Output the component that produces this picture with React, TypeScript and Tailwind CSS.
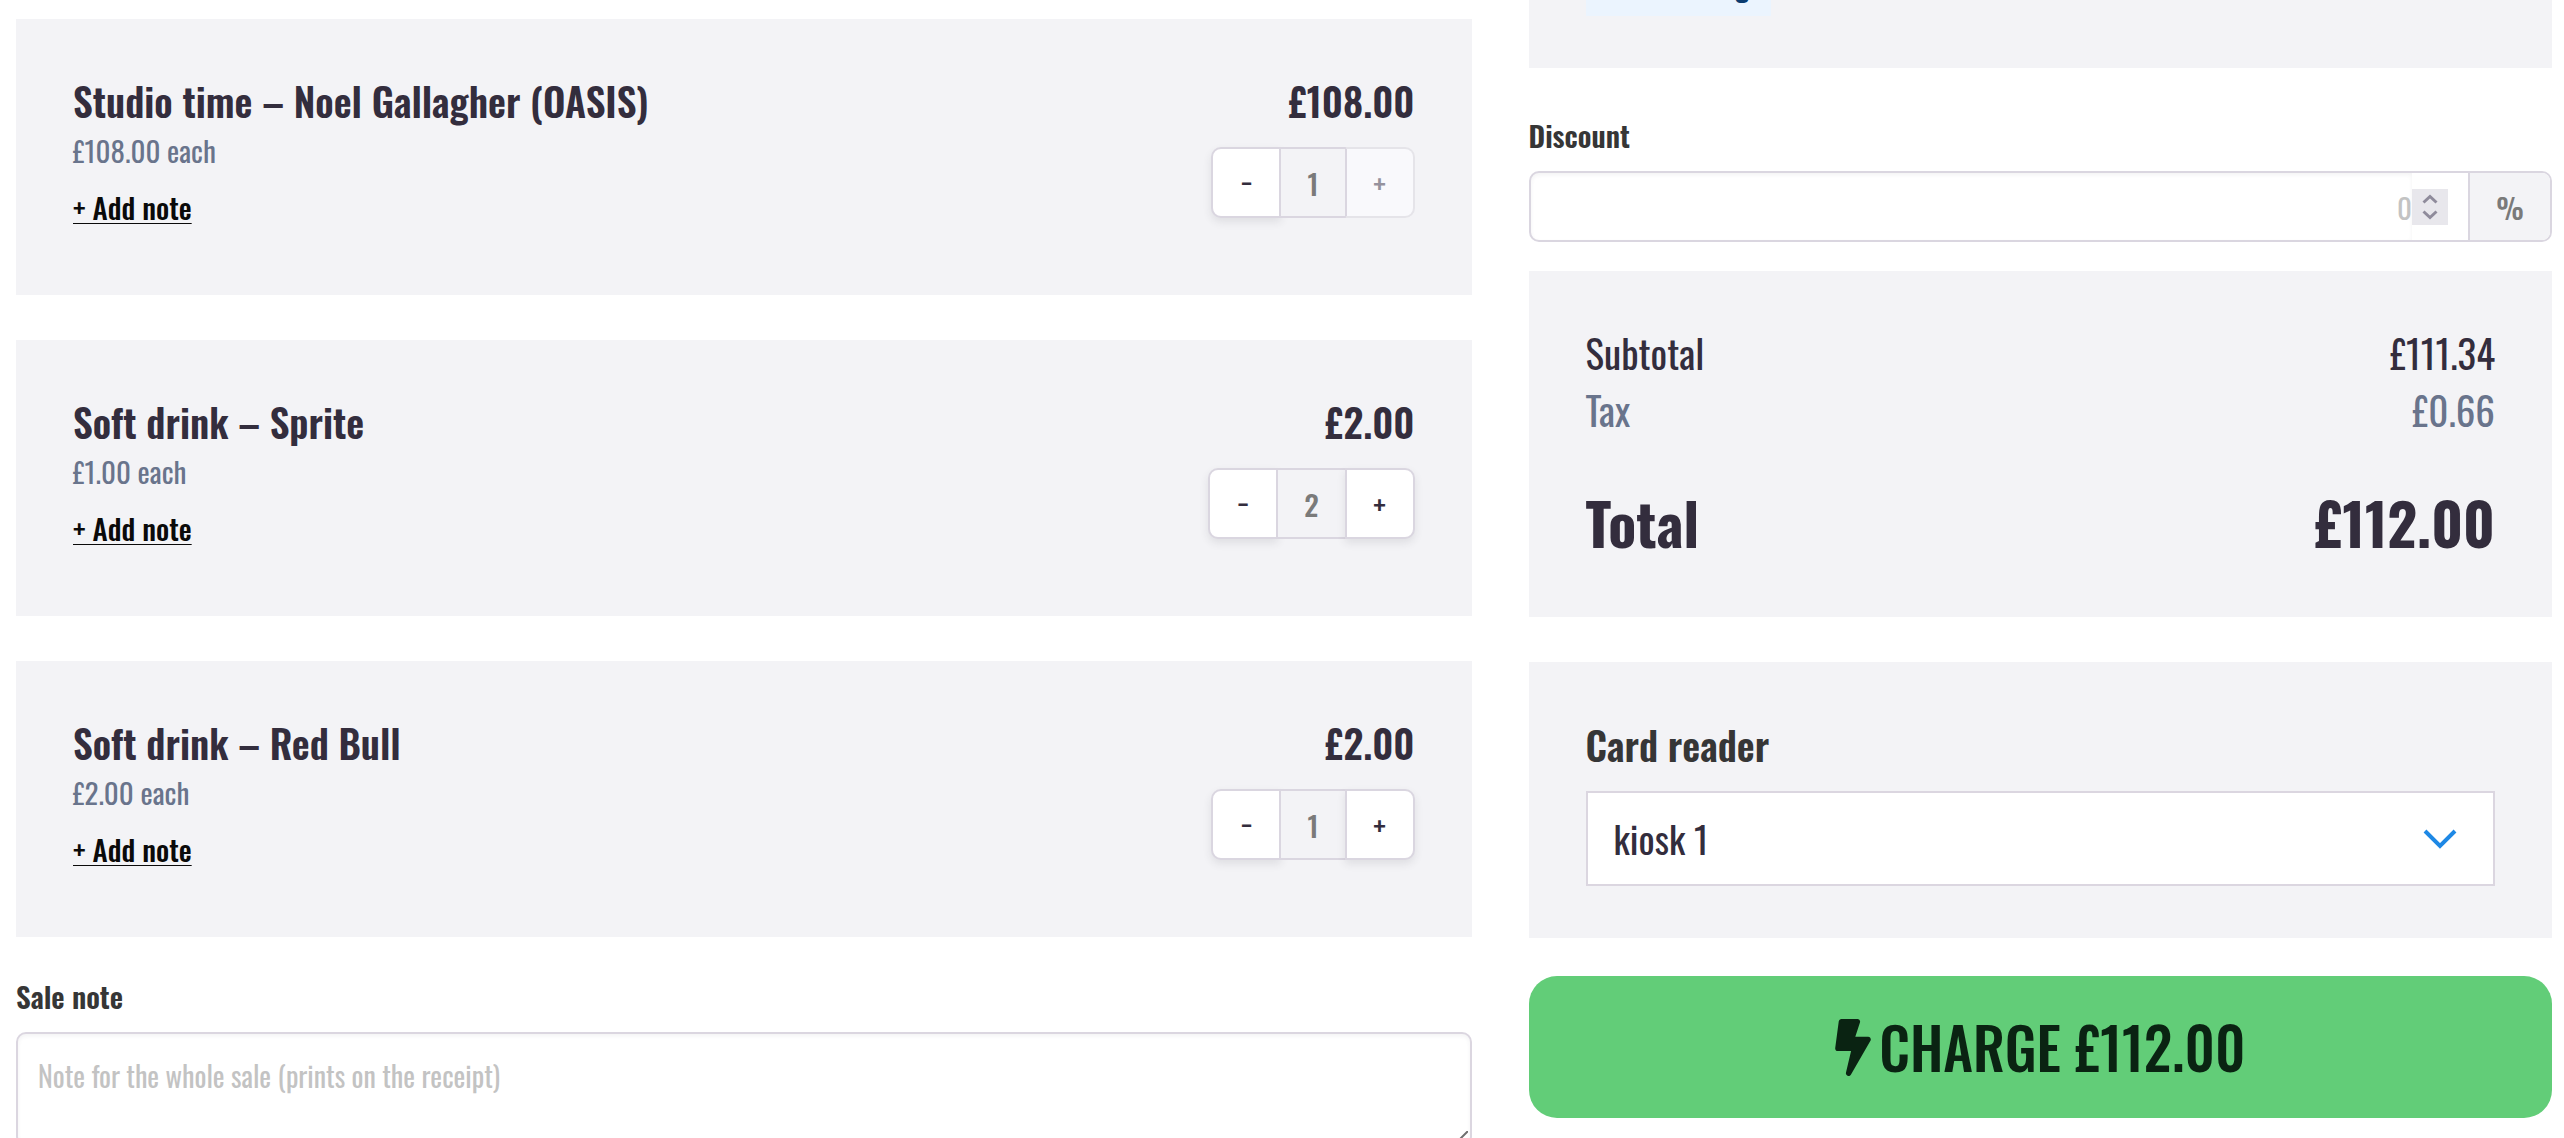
import { useState } from 'react';
import { FaBolt } from 'react-icons/fa';

interface CartLine {
  id: string;
  name: string;
  unitPrice: number;
  quantity: number;
  maxQuantity?: number;
}

const initialLines: CartLine[] = [
  { id: 'studio-time', name: 'Studio time – Noel Gallagher (OASIS)', unitPrice: 108, quantity: 1, maxQuantity: 1 },
  { id: 'sprite', name: 'Soft drink – Sprite', unitPrice: 1, quantity: 2 },
  { id: 'red-bull', name: 'Soft drink – Red Bull', unitPrice: 2, quantity: 1 },
];

const TAX = 0.66;

const formatPrice = (value: number) => `£${value.toFixed(2)}`;

interface QuantityStepperProps {
  quantity: number;
  max?: number;
  onChange: (quantity: number) => void;
}

function QuantityStepper({ quantity, max, onChange }: QuantityStepperProps) {
  const atMax = max !== undefined && quantity >= max;

  return (
    <div className="flex h-[71px] text-[29px] font-medium text-[#332d3d]">
      <button
        type="button"
        aria-label="Decrease quantity"
        onClick={() => onChange(Math.max(0, quantity - 1))}
        className="w-[70px] rounded-l-[10px] border-2 border-[#dad6e0] bg-white shadow-[0_4px_8px_rgba(50,45,60,0.1)]"
      >
        −
      </button>
      <output className="-ml-[2px] flex items-center justify-center border-2 border-[#dad6e0] bg-[#f3f3f6] px-[26px] text-[#7a7a7a]">
        {quantity}
      </output>
      <button
        type="button"
        aria-label="Increase quantity"
        disabled={atMax}
        onClick={() => onChange(quantity + 1)}
        className="-ml-[2px] w-[70px] rounded-r-[10px] border-2 border-[#dad6e0] bg-white shadow-[0_4px_8px_rgba(50,45,60,0.1)] disabled:border-y-[#e5e4e9] disabled:border-r-[#e5e4e9] disabled:bg-[#f9f9fc] disabled:text-[#95929d] disabled:shadow-none"
      >
        +
      </button>
    </div>
  );
}

export default function App() {
  const [lines, setLines] = useState(initialLines);
  const [discount, setDiscount] = useState('');
  const [saleNote, setSaleNote] = useState('');

  const gross = lines.reduce((sum, line) => sum + line.unitPrice * line.quantity, 0);
  const total = gross * (1 - Number(discount) / 100);

  const setQuantity = (id: string, quantity: number) => {
    setLines(lines.map(line => (line.id === id ? { ...line, quantity } : line)));
  };

  return (
    <div className="grid h-screen grid-cols-[64fr_45fr] gap-[57px] overflow-hidden bg-white pr-3 pl-4 font-['Oswald','Roboto_Condensed','Roboto',sans-serif] text-[#363636]">
      {/* Cart */}
      <main className="pt-[19px]">
        <ul className="space-y-[45px]">
          {lines.map(line => (
            <li key={line.id} className="flex justify-between bg-[#f3f3f6] px-[57px] py-[55px]">
              <div>
                <h2 className="text-[39px] leading-[52px] font-semibold text-[#332d3d]">{line.name}</h2>
                <p className="text-[29px] leading-[48px] text-[#69748c]">{formatPrice(line.unitPrice)} each</p>
                <button type="button" className="block text-[29px] leading-[66px] font-medium text-[#0a0a0a] underline decoration-1 underline-offset-[3px]">
                  + Add note
                </button>
              </div>
              <div className="flex flex-col items-end">
                <p className="mb-[21px] text-[39px] leading-[52px] font-semibold text-[#332d3d]">
                  {formatPrice(line.unitPrice * line.quantity)}
                </p>
                <QuantityStepper
                  quantity={line.quantity}
                  max={line.maxQuantity}
                  onChange={quantity => setQuantity(line.id, quantity)}
                />
              </div>
            </li>
          ))}
        </ul>

        <label htmlFor="sale-note" className="mt-[37px] mb-[14px] block text-[29px] leading-[44px] font-semibold">
          Sale note
        </label>
        <div className="relative">
          <textarea
            id="sale-note"
            placeholder="Note for the whole sale (prints on the receipt)"
            value={saleNote}
            onChange={(e) => setSaleNote(e.target.value)}
            className="block h-[114px] w-full resize-none rounded-[10px] border-2 border-[#dbd6e0] px-5 py-5 text-[28px] leading-[44px] shadow-[inset_0_2px_4px_rgba(50,45,60,0.06)] placeholder:text-[#c3c3c3]"
          />
          <svg className="pointer-events-none absolute right-1 bottom-0 size-[15px]" viewBox="0 0 15 15" stroke="#6f6f6f" strokeWidth="2">
            <path d="M0 15L15 0M8 15L15 8" />
          </svg>
        </div>
      </main>

      {/* Checkout */}
      <aside>
        <section className="-mt-[46px] bg-[#f3f3f6] px-[57px] pb-[52px]">
          <a href="#booking" className="inline-block bg-[#ebf4fe] px-[22px] text-[29px] leading-[62px] font-medium text-[#0b3c6f]">
            New booking
          </a>
        </section>

        <label htmlFor="discount" className="mt-[45px] mb-[14px] block text-[29px] leading-[44px] font-semibold">
          Discount
        </label>
        <div className="flex h-[71px] rounded-[10px] border-2 border-[#dad6e0] text-[29px]">
          <input
            id="discount"
            type="number"
            min={0}
            max={100}
            placeholder="0"
            value={discount}
            onChange={(e) => setDiscount(e.target.value)}
            className="min-w-0 flex-1 [appearance:textfield] rounded-l-lg text-right shadow-[inset_0_2px_4px_rgba(50,45,60,0.06)] placeholder:text-[#c3c3c3] [&::-webkit-inner-spin-button]:appearance-none"
          />
          <span className="flex items-center pr-5">
            <svg className="size-9 bg-[#e8e7ec]" viewBox="0 0 36 36" fill="none" stroke="#8f8b9b" strokeWidth="3">
              <path d="M11.5 13.5L18 7.5L24.5 13.5M11.5 22.5L18 28.5L24.5 22.5" />
            </svg>
          </span>
          <span className="flex w-[82px] items-center justify-center rounded-r-lg border-l-2 border-[#dad6e0] bg-[#f3f3f6] font-medium text-[#7a7a7a]">
            %
          </span>
        </div>

        <dl className="mt-[29px] bg-[#f3f3f6] px-[57px] pt-[53px] pb-[59px] text-[39px] leading-[57px] text-[#332d3d]">
          <div className="flex justify-between">
            <dt>Subtotal</dt>
            <dd>{formatPrice(total - TAX)}</dd>
          </div>
          <div className="flex justify-between text-[#69748c]">
            <dt>Tax</dt>
            <dd>{formatPrice(TAX)}</dd>
          </div>
          <div className="mt-12 flex justify-between text-[58px] leading-[72px] font-bold">
            <dt>Total</dt>
            <dd>{formatPrice(total)}</dd>
          </div>
        </dl>

        <section className="mt-[45px] bg-[#f3f3f6] px-[57px] pt-[57px] pb-[52px]">
          <label htmlFor="card-reader" className="mb-[22px] block text-[39px] leading-[50px] font-semibold">
            Card reader
          </label>
          <div className="relative">
            <select
              id="card-reader"
              className="block h-[95px] w-full appearance-none border-2 border-[#dbd6e0] bg-white px-[26px] text-[38px] text-[#332d3d]"
            >
              <option>kiosk 1</option>
            </select>
            <svg className="pointer-events-none absolute top-[38px] right-[38px] h-5 w-[34px]" viewBox="0 0 34 20" fill="none" stroke="#1e88e5" strokeWidth="4">
              <path d="M2 2L17 17L32 2" />
            </svg>
          </div>
        </section>

        <button
          type="button"
          className="mt-[38px] flex h-[142px] w-full items-center justify-center gap-2 rounded-[28px] bg-[#62cd78] text-[57px] font-medium text-[#0a2312]"
        >
          <FaBolt aria-hidden="true" className="w-9" />
          CHARGE {formatPrice(total)}
        </button>
      </aside>
    </div>
  );
}
